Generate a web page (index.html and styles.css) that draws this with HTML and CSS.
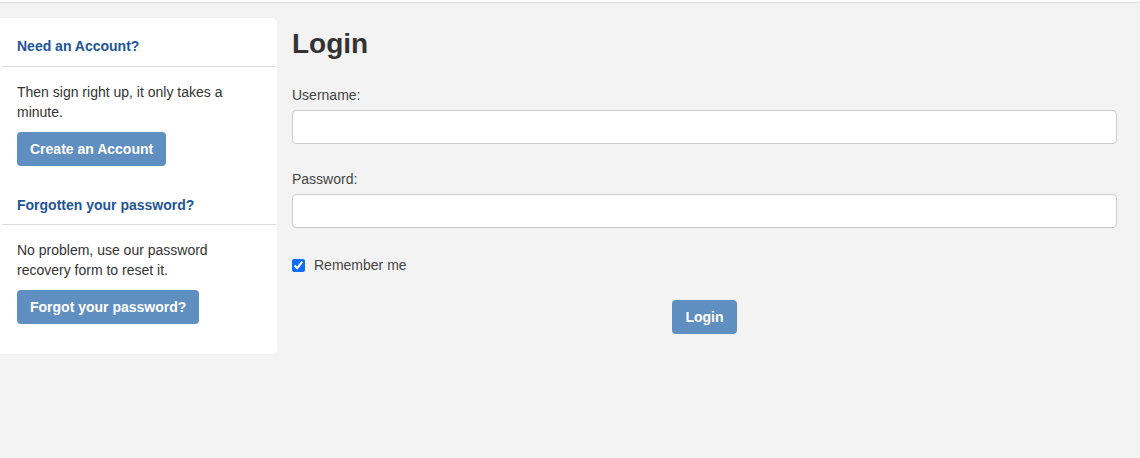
FILE: index.html
```html
<!DOCTYPE html>
<html lang="en">
<head>
<meta charset="utf-8">
<title>Login</title>
<link rel="stylesheet" href="styles.css">
</head>
<body>
<div class="topbar"></div>
<div class="page">
  <aside class="sidebar">
    <h3 class="side-title">Need an Account?</h3>
    <div class="side-body">
      <p>Then sign right up, it only takes a minute.</p>
      <a class="btn" href="#">Create an Account</a>
    </div>
    <h3 class="side-title side-title-next">Forgotten your password?</h3>
    <div class="side-body">
      <p>No problem, use our password recovery form to reset it.</p>
      <a class="btn" href="#">Forgot your password?</a>
    </div>
  </aside>
  <main class="main">
    <h1 class="title">Login</h1>
    <form class="form">
      <label class="field">
        <span class="label">Username:</span>
        <input type="text" class="input">
      </label>
      <label class="field">
        <span class="label">Password:</span>
        <input type="password" class="input">
      </label>
      <label class="remember">
        <input type="checkbox" checked class="check">
        <span>Remember me</span>
      </label>
      <div class="actions">
        <button type="button" class="btn">Login</button>
      </div>
    </form>
  </main>
</div>
</body>
</html>
```
FILE: styles.css
```css
* { box-sizing: border-box; }
html, body {
  margin: 0;
  padding: 0;
  background: #f3f3f3;
  font-family: "Liberation Sans", Arial, sans-serif;
  font-size: 14px;
  line-height: 20px;
  color: #333;
  height: 100%;
}
.topbar {
  height: 3px;
  background: #fff;
  border-bottom: 1px solid #dcdce4;
}
.page {
  display: flex;
  align-items: flex-start;
  gap: 15px;
  padding-top: 15px;
  padding-right: 23px;
}
.sidebar {
  width: 277px;
  flex: none;
  background: #fff;
  border-radius: 0 5px 5px 0;
  padding: 0 0 30px 0;
}
.side-title {
  margin: 0 1px 0 2px;
  padding: 18px 15px 10px;
  font-size: 14px;
  line-height: 20px;
  font-weight: bold;
  color: #1e5598;
  border-bottom: 1px solid #dddddd;
}
.side-title-next {
  padding-bottom: 9px;
}
.side-body {
  padding: 15px 17px 0;
  margin-bottom: 11px;
}
.side-body:last-child { margin-bottom: 0; }
.side-body p {
  margin: 0 0 10px;
  color: #333;
}
.btn {
  display: inline-block;
  height: 34px;
  line-height: 34px;
  padding: 0 13px;
  background: #5f8fc1;
  color: #fff;
  font-family: "Liberation Sans", Arial, sans-serif;
  font-weight: bold;
  font-size: 14px;
  border: none;
  border-radius: 4px;
  text-decoration: none;
}
.main {
  flex: 1;
  min-width: 0;
}
.title {
  margin: 10px 0 0;
  font-size: 28px;
  line-height: 32px;
  font-weight: bold;
  color: #333;
}
.form {
  margin-top: 25px;
}
.field {
  display: block;
  margin-bottom: 25px;
}
.label {
  display: block;
  margin-bottom: 5px;
  color: #444;
}
.input {
  display: block;
  width: 100%;
  height: 34px;
  border: 1px solid #cccccc;
  border-radius: 4px;
  background: #fff;
  font-family: inherit;
  font-size: 14px;
  padding: 6px 12px;
}
.remember {
  display: flex;
  align-items: center;
  gap: 9px;
  margin-top: 27px;
  color: #444;
}
.check {
  margin: 0;
  width: 13px;
  height: 13px;
  accent-color: #0d6efd;
}
.actions {
  display: flex;
  justify-content: center;
  margin-top: 25px;
}
```
